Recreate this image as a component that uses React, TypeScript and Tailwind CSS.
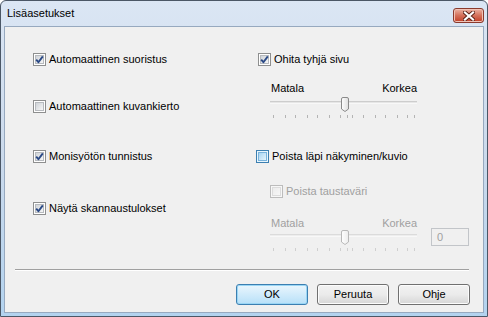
import React from 'react'

const font = "font-['Liberation_Sans',Arial,sans-serif]"

type BoxState = 'normal' | 'hover' | 'disabled'

function CheckBox({ checked = false, state = 'normal' }: { checked?: boolean; state?: BoxState }) {
  const outer =
    state === 'hover'
      ? 'border-[#3c7fb1] bg-[#e8f6fd]'
      : state === 'disabled'
        ? 'border-[#bcbcbc] bg-[#f7f7f7]'
        : 'border-[#8e8f8f] bg-white'
  const inner =
    state === 'hover'
      ? 'from-[#a8d5f2] to-[#e4f4fc] border-[#79b3dc]'
      : state === 'disabled'
        ? 'from-[#ececec] to-[#f7f7f7] border-[#dcdcdc]'
        : 'from-[#cfd3d8] to-[#f6f6f6] border-[#b7babe]'
  return (
    <span className={`relative flex h-[13px] w-[13px] shrink-0 items-center justify-center border ${outer}`}>
      <span className={`h-[9px] w-[9px] border bg-gradient-to-br ${inner}`} />
      {checked && (
        <svg className="absolute inset-0" width="11" height="11" viewBox="0 0 11 11">
          <path d="M2.2 5.6 L4.4 8.2 L8.8 2.4" fill="none" stroke="#2b4a86" strokeWidth="1.9" strokeLinejoin="round" />
        </svg>
      )}
    </span>
  )
}

function Check({ label, checked, state = 'normal' }: { label: string; checked?: boolean; state?: BoxState }) {
  return (
    <div className="flex h-[13px] items-center gap-[3px]">
      <CheckBox checked={checked} state={state} />
      <span className={`text-[11px] leading-[13px] ${state === 'disabled' ? 'text-[#a0a0a0]' : 'text-black'}`}>
        {label}
      </span>
    </div>
  )
}

const ticks = [3, 15, 25, 37, 47, 59, 70, 77, 82, 93, 105, 115, 127, 137, 144]

function Slider({ disabled = false }: { disabled?: boolean }) {
  const edge = disabled ? '#b8b8b8' : '#8a8a8a'
  const tick = disabled ? '#cfcfcf' : '#b4b4b4'
  return (
    <svg width="147" height="22" viewBox="0 0 147 22" className="block">
      <defs>
        <linearGradient id={disabled ? 'thd' : 'th'} x1="0" y1="0" x2="1" y2="0">
          <stop offset="0" stopColor="#ffffff" />
          <stop offset="1" stopColor={disabled ? '#ececec' : '#dedede'} />
        </linearGradient>
      </defs>
      <rect x="0" y="4.5" width="147" height="1" fill={disabled ? '#c6c6c6' : '#a9a9a9'} />
      <rect x="0" y="5.5" width="147" height="1" fill="#ffffff" />
      {ticks.map((x) => (
        <rect key={x} x={x} y="18" width="1" height="3" fill={tick} />
      ))}
      <path
        d="M71.5 2 Q71.5 0.5 73 0.5 L77 0.5 Q78.5 0.5 78.5 2 L78.5 12 L75 14.5 L71.5 12 Z"
        fill={`url(#${disabled ? 'thd' : 'th'})`}
        stroke={edge}
      />
    </svg>
  )
}

function SliderLabels({ disabled = false }: { disabled?: boolean }) {
  return (
    <div className={`flex w-[147px] justify-between pl-[1px] text-[11px] leading-[13px] ${disabled ? 'text-[#a0a0a0]' : 'text-black'}`}>
      <span>Matala</span>
      <span>Korkea</span>
    </div>
  )
}

function Button({ label, primary = false }: { label: string; primary?: boolean }) {
  return (
    <div
      className={`flex h-[21px] w-[72px] items-center justify-center rounded-[3px] border text-[11px] text-black ${
        primary
          ? 'border-[#3c7fb1] bg-gradient-to-b from-[#eaf6fd] to-[#b7e0f8] shadow-[inset_0_0_0_1px_#9ad6f5]'
          : 'border-[#707070] bg-gradient-to-b from-[#f2f2f2] via-[#ebebeb] to-[#d6d6d6] shadow-[inset_0_0_0_1px_#fcfcfc]'
      }`}
    >
      {label}
    </div>
  )
}

export default function App() {
  return (
    <div className={`${font} h-[317px] w-[488px] bg-white`}>
      <div className="flex h-full w-full flex-col overflow-hidden rounded-t-[6px] border border-[#4b5766] bg-gradient-to-b from-[#dbe6f4] via-[#cbdaec] to-[#b3d3ef]">
        {/* title bar */}
        <div className="relative flex h-[25px] shrink-0 items-center pl-[6px]">
          <span className="text-[11px] text-black">Lisäasetukset</span>
          <div className="absolute right-[3px] top-[7px] flex h-[15px] w-[31px] items-center justify-center rounded-[3px] border border-[#8a3a2d] bg-gradient-to-b from-[#eab2a3] via-[#d4705a] to-[#c13c24] shadow-[inset_0_0_0_1px_#f0c2b6]">
            <svg width="12" height="10" viewBox="0 0 12 10">
              <path d="M2 1.5 L10 8.5 M10 1.5 L2 8.5" stroke="#5a2318" strokeWidth="4" strokeLinecap="square" />
              <path d="M2 1.5 L10 8.5 M10 1.5 L2 8.5" stroke="#ffffff" strokeWidth="2.2" strokeLinecap="square" />
            </svg>
          </div>
        </div>

        {/* client area */}
        <div className="mx-[3px] mb-[3px] flex flex-1 flex-col border border-[#97a9bf] bg-[#f0f0f0]">
          <div className="flex h-[242px] shrink-0">
            <div className="flex w-[251px] shrink-0 flex-col pl-[28px]">
              <div className="mt-[26px]">
                <Check label="Automaattinen suoristus" checked />
              </div>
              <div className="mt-[34px]">
                <Check label="Automaattinen kuvankierto" />
              </div>
              <div className="mt-[37px]">
                <Check label="Monisyötön tunnistus" checked />
              </div>
              <div className="mt-[39px]">
                <Check label="Näytä skannaustulokset" checked />
              </div>
            </div>

            <div className="flex flex-col">
              <div className="ml-[2px] mt-[26px]">
                <Check label="Ohita tyhjä sivu" checked />
              </div>
              <div className="ml-[14px] mt-[16px]">
                <SliderLabels />
              </div>
              <div className="ml-[14px] mt-[2px]">
                <Slider />
              </div>
              <div className="mt-[31px]">
                <Check label="Poista läpi näkyminen/kuvio" state="hover" />
              </div>
              <div className="ml-[14px] mt-[22px]">
                <Check label="Poista taustaväri" state="disabled" />
              </div>
              <div className="ml-[14px] mt-[19px] flex items-start gap-[14px]">
                <div className="flex flex-col">
                  <SliderLabels disabled />
                  <div className="mt-[0px]">
                    <Slider disabled />
                  </div>
                </div>
                <div className="mt-[11px] flex h-[18px] w-[38px] items-center border border-[#c2c5c9] bg-[#f0f0f0] pl-[5px] text-[11px] text-[#a0a0a0]">
                  0
                </div>
              </div>
            </div>
          </div>

          <div className="ml-[10px] mr-[14px] border-t border-b border-t-[#a0a0a0] border-b-white" />

          <div className="mr-[13px] mt-[13px] flex justify-end gap-[9px]">
            <Button label="OK" primary />
            <Button label="Peruuta" />
            <Button label="Ohje" />
          </div>
        </div>
      </div>
    </div>
  )
}
